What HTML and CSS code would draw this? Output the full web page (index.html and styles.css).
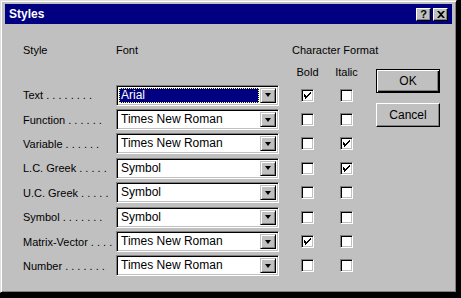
FILE: index.html
```html
<!DOCTYPE html>
<html>
<head>
	<meta charset="utf-8">
	<title>Styles</title>
	<link rel="stylesheet" href="styles.css">
</head>
<body>
	<div class="window">
		<div class="titlebar">
			<span class="title">Styles</span>
			<div class="caption-buttons">
				<span class="cap-btn">?</span>
				<span class="cap-btn close">
					<svg width="8" height="7" viewBox="0 0 8 7"><path d="M0 0h2l2 2 2-2h2L5 3.5 8 7H6L4 5 2 7H0l3-3.5z" fill="#000"/></svg>
				</span>
			</div>
		</div>

		<div class="content">
			<div class="grid">
				<div class="head">Style</div>
				<div class="head">Font</div>
				<div class="head format">Character Format</div>

				<div></div>
				<div></div>
				<div class="head sub">Bold</div>
				<div class="head sub">Italic</div>

				<div class="label">Text<span class="dots">. . . . . . . .</span></div>
				<div class="combo selected"><span class="value">Arial</span><span class="drop"><i></i></span></div>
				<div class="cell"><span class="check on"></span></div>
				<div class="cell"><span class="check"></span></div>

				<div class="label">Function<span class="dots">. . . . . .</span></div>
				<div class="combo"><span class="value">Times New Roman</span><span class="drop"><i></i></span></div>
				<div class="cell"><span class="check"></span></div>
				<div class="cell"><span class="check"></span></div>

				<div class="label">Variable<span class="dots">. . . . . .</span></div>
				<div class="combo"><span class="value">Times New Roman</span><span class="drop"><i></i></span></div>
				<div class="cell"><span class="check"></span></div>
				<div class="cell"><span class="check on"></span></div>

				<div class="label">L.C. Greek<span class="dots">. . . . .</span></div>
				<div class="combo"><span class="value">Symbol</span><span class="drop"><i></i></span></div>
				<div class="cell"><span class="check"></span></div>
				<div class="cell"><span class="check on"></span></div>

				<div class="label">U.C. Greek<span class="dots">. . . . .</span></div>
				<div class="combo"><span class="value">Symbol</span><span class="drop"><i></i></span></div>
				<div class="cell"><span class="check"></span></div>
				<div class="cell"><span class="check"></span></div>

				<div class="label">Symbol<span class="dots">. . . . . . .</span></div>
				<div class="combo"><span class="value">Symbol</span><span class="drop"><i></i></span></div>
				<div class="cell"><span class="check"></span></div>
				<div class="cell"><span class="check"></span></div>

				<div class="label">Matrix-Vector<span class="dots">. . . .</span></div>
				<div class="combo"><span class="value">Times New Roman</span><span class="drop"><i></i></span></div>
				<div class="cell"><span class="check on"></span></div>
				<div class="cell"><span class="check"></span></div>

				<div class="label">Number<span class="dots">. . . . . . .</span></div>
				<div class="combo"><span class="value">Times New Roman</span><span class="drop"><i></i></span></div>
				<div class="cell"><span class="check"></span></div>
				<div class="cell"><span class="check"></span></div>
			</div>

			<div class="buttons">
				<div class="btn default"><span>OK</span></div>
				<div class="btn"><span>Cancel</span></div>
			</div>
		</div>
	</div>
</body>
</html>
```

FILE: styles.css
```css
body {
	margin: 0;
	background-color: #000;
	font-family: "Liberation Sans", Arial, sans-serif;
	font-size: 11px;
	color: #000;
}

.window {
	width: 457px;
	height: 293px;
	box-sizing: border-box;
	background-color: #c0c0c0;
	border: 1px solid;
	border-color: #dfdfdf #000 #000 #dfdfdf;
	box-shadow: inset 1px 1px #fff, inset -1px -1px #808080;
}

.titlebar {
	margin: 3px 4px 0 4px;
	height: 20px;
	background-color: #000080;
	display: flex;
	align-items: center;
	justify-content: space-between;
	padding: 0 4px 0 4px;
}

.title {
	color: #fff;
	font-weight: bold;
	font-size: 12px;
}

.caption-buttons {
	display: flex;
	gap: 2px;
}

.cap-btn {
	width: 15px;
	height: 13px;
	box-sizing: border-box;
	background-color: #c0c0c0;
	border: 1px solid;
	border-color: #fff #000 #000 #fff;
	box-shadow: inset -1px -1px #808080;
	font-weight: bold;
	font-size: 11px;
	line-height: 11px;
	display: flex;
	align-items: center;
	justify-content: center;
}

.content {
	display: flex;
	padding: 15px 0 0 22px;
}

.grid {
	display: grid;
	grid-template-columns: 93px 171px 41px 37px;
	grid-template-rows: 22px 22px repeat(8, 24.4px);
	align-items: center;
}

.head {
	white-space: nowrap;
}

.format {
	grid-column: 3 / span 2;
	margin-left: 5px;
}

.sub {
	text-align: center;
}

.label {
	white-space: nowrap;
}

.dots {
	margin-left: 3px;
}

.combo {
	width: 163px;
	height: 21px;
	box-sizing: border-box;
	background-color: #fff;
	border: 1px solid;
	border-color: #808080 #fff #fff #808080;
	box-shadow: inset 1px 1px #000, inset -1px -1px #c0c0c0;
	padding: 2px;
	display: flex;
	font-size: 12px;
}

.value {
	flex: 1;
	padding-left: 2px;
	line-height: 15px;
	white-space: nowrap;
}

.selected .value {
	background-color: #000080;
	color: #fff;
	outline: 1px dotted #ffff60;
	outline-offset: -1px;
	margin-right: 1px;
}

.drop {
	width: 16px;
	box-sizing: border-box;
	background-color: #c0c0c0;
	border: 1px solid;
	border-color: #c0c0c0 #000 #000 #c0c0c0;
	box-shadow: inset 1px 1px #fff, inset -1px -1px #808080;
	display: flex;
	align-items: center;
	justify-content: center;
}

.drop i {
	width: 0;
	height: 0;
	border-left: 3.5px solid transparent;
	border-right: 3.5px solid transparent;
	border-top: 4px solid #000;
}

.cell {
	display: flex;
	justify-content: center;
}

.check {
	width: 13px;
	height: 13px;
	box-sizing: border-box;
	background-color: #fff;
	border: 1px solid;
	border-color: #808080 #fff #fff #808080;
	box-shadow: inset 1px 1px #000, inset -1px -1px #c0c0c0;
	display: flex;
	align-items: center;
	justify-content: center;
}

.check.on::after {
	content: "";
	width: 7px;
	height: 7px;
	background: url("data:image/svg+xml;utf8,<svg xmlns='http://www.w3.org/2000/svg' width='7' height='7' viewBox='0 0 7 7'><path d='M0 2h1v1h1v1h1V3h1V2h1V1h1V0h1v2h-1v1h-1v1h-1v1h-1v1h-1v1h-1V6H1V5H0z' fill='black'/></svg>");
}

.buttons {
	margin-left: 11px;
	padding-top: 30px;
	display: flex;
	flex-direction: column;
	gap: 10px;
}

.btn {
	width: 64px;
	height: 24px;
	box-sizing: border-box;
	border: 1px solid;
	border-color: #fff #000 #000 #fff;
	box-shadow: inset -1px -1px #808080;
	display: flex;
	align-items: center;
	justify-content: center;
	font-size: 12px;
}

.btn.default {
	border: 1px solid #000;
	box-shadow: inset 1px 1px #fff, inset -1px -1px #000, inset -2px -2px #808080;
}
```
